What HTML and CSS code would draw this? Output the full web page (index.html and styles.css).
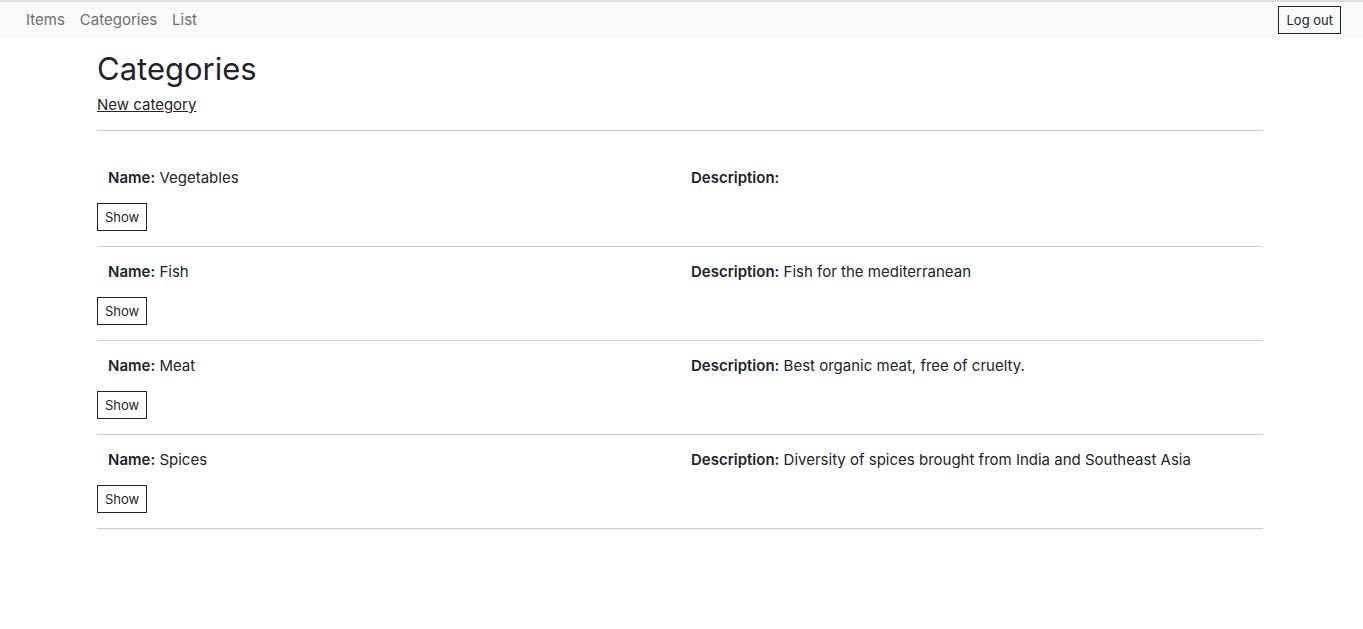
FILE: index.html
```html
<!DOCTYPE html>
<html lang="en">
<head>
<meta charset="utf-8">
<title>Categories</title>
<link rel="stylesheet" href="styles.css">
</head>
<body>
<nav class="navbar">
  <ul class="nav-links">
    <li><a href="#">Items</a></li>
    <li><a href="#">Categories</a></li>
    <li><a href="#">List</a></li>
  </ul>
  <button class="btn btn-logout">Log out</button>
</nav>
<main class="container">
  <h1 class="title">Categories</h1>
  <a class="new-link" href="#">New category</a>
  <div class="divider"></div>
  <div class="list">
    <div class="row">
      <div class="fields">
        <p class="field"><strong>Name:</strong> Vegetables</p>
        <p class="field"><strong>Description:</strong></p>
      </div>
      <button class="btn">Show</button>
    </div>
    <div class="row">
      <div class="fields">
        <p class="field"><strong>Name:</strong> Fish</p>
        <p class="field"><strong>Description:</strong> Fish for the mediterranean</p>
      </div>
      <button class="btn">Show</button>
    </div>
    <div class="row">
      <div class="fields">
        <p class="field"><strong>Name:</strong> Meat</p>
        <p class="field"><strong>Description:</strong> Best organic meat, free of cruelty.</p>
      </div>
      <button class="btn">Show</button>
    </div>
    <div class="row">
      <div class="fields">
        <p class="field"><strong>Name:</strong> Spices</p>
        <p class="field"><strong>Description:</strong> Diversity of spices brought from India and Southeast Asia</p>
      </div>
      <button class="btn">Show</button>
    </div>
  </div>
</main>
</body>
</html>
```
FILE: styles.css
```css
* { box-sizing: border-box; }
html, body { margin: 0; padding: 0; }
body {
  font-family: Inter, "Open Sans", sans-serif;
  color: #212529;
  background: #fff;
  font-size: 15px;
  line-height: 1.5;
}
.navbar {
  display: flex;
  align-items: center;
  justify-content: space-between;
  height: 38px;
  border-top: 2px solid #dcdcdc;
  background: #f8f9fa;
  padding: 0 22px 0 26px;
}
.nav-links {
  display: flex;
  gap: 15px;
  list-style: none;
  margin: 0;
  padding: 0;
}
.nav-links a {
  color: #6c6f73;
  text-decoration: none;
  font-size: 15px;
}
.btn {
  font-family: inherit;
  font-size: 13px;
  color: #212529;
  background: #fff;
  border: 1px solid #212529;
  border-radius: 0;
  height: 28px;
  padding: 0 7px;
  cursor: pointer;
}
.btn-logout { background: transparent; }
.container {
  width: 1166px;
  margin-left: 97px;
}
.title {
  font-size: 31px;
  font-weight: 400;
  margin: 13px 0 0;
  line-height: 36px;
}
.new-link {
  display: inline-block;
  margin-top: 7px;
  color: #212529;
  font-size: 15px;
}
.divider {
  margin-top: 13px;
  border-top: 1px solid #c9c9c9;
}
.list { margin-top: 22px; }
.row {
  padding: 13px 0 15px;
  border-bottom: 1px solid #c9c9c9;
}
.fields {
  display: grid;
  grid-template-columns: 1fr 1fr;
  margin-bottom: 14px;
}
.field {
  margin: 0;
  padding: 0 11px;
  line-height: 23px;
}
.field strong { font-weight: 600; }
```
